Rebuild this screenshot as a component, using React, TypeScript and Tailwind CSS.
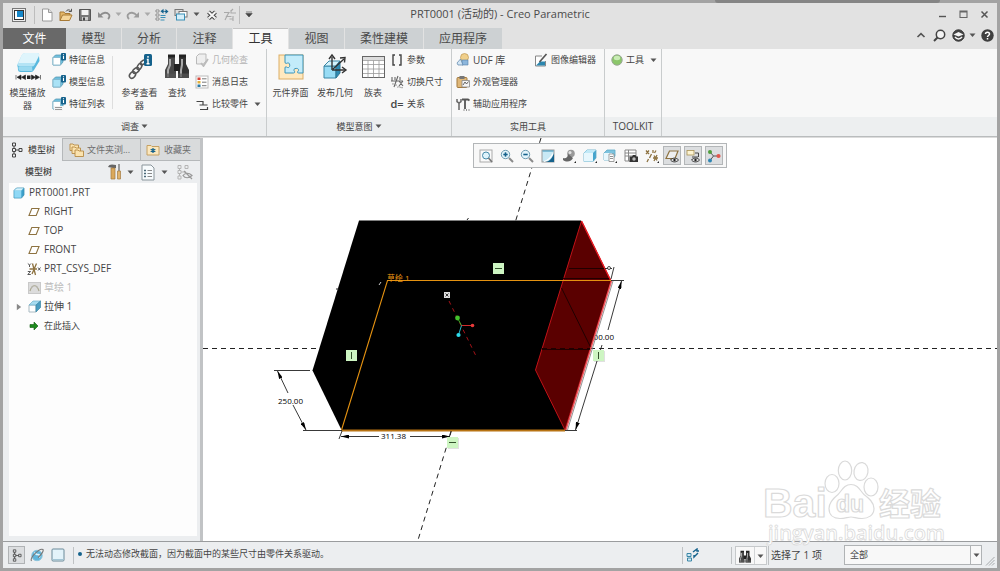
import type { ReactNode } from "react";

type IconProps = { w?: number; h?: number; box?: string; children: ReactNode };

function Svg({ w = 14, h = 14, box, children }: IconProps) {
  return (
    <svg width={w} height={h} viewBox={box ?? `0 0 ${w} ${h}`} fill="none" className="shrink-0" aria-hidden="true">
      {children}
    </svg>
  );
}

function Caret({ color = "#555" }: { color?: string }) {
  return (
    <Svg w={7} h={5}>
      <path d="M.5 .5h6l-3 3.5z" fill={color} />
    </Svg>
  );
}

/* ---------- quick access icons ---------- */

const AppIcon = () => (
  <Svg w={14} h={14}>
    <rect x=".5" y=".5" width="13" height="13" fill="#eee" stroke="#777" />
    <rect x="2.5" y="2.5" width="9" height="9" fill="#fff" stroke="#333" />
    <rect x="5" y="3" width="6" height="6" fill="#1587c9" />
  </Svg>
);
const NewIcon = () => (
  <Svg>
    <path d="M2.5 1h6L12 4.5V13H2.5z" fill="#fff" stroke="#9a9a9a" />
    <path d="M8.5 1v3.5H12" fill="#ddd" stroke="#9a9a9a" />
  </Svg>
);
const OpenIcon = () => (
  <Svg>
    <path d="M1 12.5V4h4l1 1.5h5V7" fill="#e5b86a" stroke="#a87a35" />
    <path d="M1 12.5 3.5 7H13l-2.5 5.5z" fill="#f6d699" stroke="#a87a35" />
    <path d="M7 3.5C8 1.5 10 1.5 11.5 2.5M12.5 .8v2.7H9.8" stroke="#555" />
  </Svg>
);
const SaveIcon = () => (
  <Svg>
    <path d="M1.5 1.5h11v11h-11z" fill="#777" stroke="#555" />
    <rect x="3.5" y="2" width="7" height="5" fill="#f2f2f2" />
    <rect x="4" y="9" width="6" height="3.5" fill="#ccc" />
    <rect x="5" y="9.5" width="2" height="3" fill="#444" />
  </Svg>
);
const UndoIcon = () => (
  <Svg>
    <path d="M3 7.5C6 4 10 4 12 6.5c.8 1.5.5 3-1 4.5" stroke="#8d8d8d" strokeWidth="1.8" />
    <path d="M1 4v5.5h5.5z" fill="#8d8d8d" />
  </Svg>
);
const RedoIcon = () => (
  <Svg>
    <path d="M11 7.5C8 4 4 4 2 6.5c-.8 1.5-.5 3 1 4.5" stroke="#9b9b9b" strokeWidth="1.8" />
    <path d="M13 4v5.5H7.5z" fill="#9b9b9b" />
  </Svg>
);
const RegenIcon = () => (
  <Svg>
    <path d="M1 2h3v2H1zM1 6h3v2H1zM1 10h3v2H1z" fill="#fff" stroke="#777" strokeWidth=".8" />
    <path d="M5.5 7.5h5M5.5 9.5h5M5.5 12h4" stroke="#3a8fb5" strokeWidth="1.2" />
    <path d="M5.500 3.200 8.500 .8v5zM13.500 3.500 10.500 1v5z" fill="#15628c" />
    <path d="M8 3.300h1.500M9.500 3.500H11" stroke="#15628c" />
  </Svg>
);
const WindowsIcon = () => (
  <Svg>
    <rect x="1" y="1.5" width="8" height="6" fill="#ddd" stroke="#777" />
    <rect x="5" y="3.5" width="8" height="5.5" fill="#fff" stroke="#777" />
    <rect x="2.5" y="6" width="8" height="6" fill="#d6effa" stroke="#3a8fb5" />
  </Svg>
);
const CloseWinIcon = () => (
  <Svg>
    <path d="M3.5 4 10.5 10.5M10.5 4 3.500 10.5" stroke="#444" strokeWidth="4" />
    <path d="M3.500 4 10.5 10.5M10.5 4 3.500 10.5" stroke="#f6f6f6" strokeWidth="2" />
  </Svg>
);
const DisabledIcon = () => (
  <Svg>
    <path d="M1 4.5h5l-2.5 4h5M2 12l4-8M8 2v3h5M10 8v5M6.5 11h3M8 3l2-2" stroke="#a9a9a9" strokeWidth="1.1" />
  </Svg>
);

/* ---------- ribbon icons ---------- */

const PlayerIcon = () => (
  <Svg w={28} h={28}>
    <path d="M7.500 2.500Q8.500 0 11 0h12q3 0 2 3l-4 10q-.8 1.500-3 1.500H5Q2.500 14 3.500 11z" fill="#b4e4f5" />
    <path d="M7.500 2.500Q8.500 0 11 0h12q3 0 2 3l-3.500 7H4.500z" fill="#dff5fc" />
    <path d="M3.500 11 4 17q.2 2 2.500 2H17q2 0 3-2l5.500-9L25 3l-4.500 9q-.8 1.500-3 1.500H6q-2.500-.5-2.500-2.500z" fill="#59b9de" />
    <path d="M4.500 13.500h13.500l.5 4.500H7q-2.300 0-2.500-2z" fill="#9bdaf0" />
    <path d="M2 22v4.500M7 22v4.500l-4-2.250zM11.500 22v4.500l-4-2.250zM17.500 22v4.500l4-2.250zM21.500 22v4.500l4-2.250zM26.500 22v4.500" fill="#222" stroke="#222" strokeWidth=".6" />
    <rect x="13" y="22.500" width="3.500" height="3.500" fill="#222" />
  </Svg>
);

function InfoCube({ fill, list = false }: { fill: string; list?: boolean }) {
  return (
    <Svg>
      <path d="M1 4.5 3.500 2H11v7L8.500 12H1z" fill="#6fbfdd" stroke="#5698b3" strokeWidth=".8" />
      <path d="M1 4.5h7.5V12H1z" fill={fill} stroke="#7cb3c9" strokeWidth=".8" />
      {list && <path d="M2 9h9v5H2z" fill="#f4f4f4" />}
      {list && <path d="M3 10.5h7M3 12.5h7" stroke="#999" />}
      <rect x="9" y="0" width="5" height="7.5" rx="1" fill="#15628c" />
      <path d="M11.5 1.200v1M11.5 3v3" stroke="#fff" strokeWidth="1.1" />
    </Svg>
  );
}

const ChainIcon = () => (
  <Svg w={26} h={28}>
    <g stroke="#555" strokeWidth="1.5">
      <ellipse cx="5.500" cy="22" rx="3.600" ry="2.600" transform="rotate(-50 5.500 22)" />
      <ellipse cx="9" cy="17.500" rx="3.600" ry="2.300" transform="rotate(-35 9 17.500)" />
      <ellipse cx="12.500" cy="13.500" rx="3.400" ry="2" transform="rotate(-60 12.500 13.500)" />
      <ellipse cx="16" cy="9.500" rx="3" ry="1.800" transform="rotate(-35 16 9.500)" />
    </g>
    <rect x="17" y="1" width="8" height="12" rx="1.5" fill="#15628c" />
    <path d="M21 3v1.800M19.800 6.500H21v4M19.500 10.800h3" stroke="#fff" strokeWidth="1.4" />
  </Svg>
);

function Binoculars({ w = 28, h = 28 }: { w?: number; h?: number }) {
  return (
    <Svg w={w} h={h} box="0 0 28 28">
      <path d="M5 4h7v9l1 3v9H2v-8l3-6z" fill="#4a4a4a" />
      <path d="M16 4h7v7l3 6v8H15v-9l1-3z" fill="#333" />
      <rect x="11" y="11" width="6" height="7" fill="#222" />
      <path d="M5 1.5h7v3H5zM16 1.5h7v3h-7z" fill="#222" />
      <path d="M7 6v6l-2 5v7M19 6v6l-1 5v7" stroke="#a9a9a9" strokeWidth="2" />
      <path d="M2 20.5h11V25H2zM15 20.5h11V25H15z" fill="#555" fillOpacity=".7" />
    </Svg>
  );
}

const GeomCheckIcon = () => (
  <Svg>
    <path d="M1.5 3.5 4 1h7v7l-2.5 3h-7z" fill="#eee" stroke="#b9b9b9" />
    <path d="m6 10 2.500 3L13 6" stroke="#bbb" strokeWidth="1.8" />
  </Svg>
);
const MsgLogIcon = () => (
  <Svg>
    <rect x="1" y="1" width="12" height="12" fill="#fff" stroke="#bbb" />
    <rect x="2.5" y="2.5" width="3" height="2.5" fill="#d8463a" />
    <rect x="2.5" y="6" width="3" height="2.5" fill="#e2b03d" />
    <rect x="2.5" y="9.5" width="3" height="2.5" fill="#2a7ba5" />
    <path d="M7 3.800h4.500M7 7.200h4.500M7 10.700h4.500" stroke="#777" />
  </Svg>
);
const CompareIcon = () => (
  <Svg>
    <path d="M1.500 4.500H8V8H4.500M8 8h4.500M5 12.500h7.500V10" stroke="#444" strokeWidth="1.2" />
  </Svg>
);
const PuzzleIcon = () => (
  <Svg w={26} h={28}>
    <rect x="1" y="2" width="24" height="24" fill="#ffe9bf" stroke="#dcae66" />
    <path
      d="M7 2H25V20H20.500c-1.500 0-1-1.500 0-2.500 1-2.800-5.500-2.800-4.500 0 1 1 1 2.500-.5 2.500H7v-5c0-2 1.500-1 2.500-.5 3 1 3-5.500 0-4.500C8.500 10.500 7 11 7 9z"
      fill="#c3ecfa"
      stroke="#3b94ba"
    />
  </Svg>
);
const PublishIcon = () => (
  <Svg w={26} h={28}>
    <path d="M2 13h12v12H2z" fill="#98dcf5" stroke="#3a86a5" />
    <path d="m2 13 5-5h11l-4 5z" fill="#d5f3fc" stroke="#3a86a5" />
    <path d="m14 13 4-5v12l-4 5z" fill="#2e8ab2" stroke="#2f7694" />
    <path d="M10 17V4M10 17h13M11 16 22 6" stroke="#333" strokeWidth="1.4" />
    <path d="m7 6 3-4 3 4M20 14l4 3-4 3M18 5l5-.5-.5 5" stroke="#333" strokeWidth="1.4" />
  </Svg>
);
const TableIcon = () => (
  <Svg w={26} h={28}>
    <rect x="2.5" y="3.5" width="22" height="21" fill="#fff" stroke="#666" />
    <rect x="3" y="4" width="21" height="3" fill="#ddd" />
    <path d="M3 7.5h21M3 11.5h21M3 16h21M3 20.5h21M8 7.5v17M13.5 7.5v17M19 7.5v17" stroke="#9b9b9b" strokeWidth=".8" />
  </Svg>
);
const ParamIcon = () => (
  <Svg>
    <path d="M5 2H3v10h2M9 2h2v10H9" stroke="#444" strokeWidth="1.4" />
  </Svg>
);
const DimSwitchIcon = () => (
  <Svg>
    <path d="M1 6h12M4 12 8 1M2 2v4M5 2v3M9 6l4 5M13 6l-4 5M10 2v3" stroke="#666" strokeWidth="1.1" />
    <path d="M2 9c2-1 3 2 5 1M7 12.5c2-2 4 1 6 0" stroke="#999" />
  </Svg>
);
const UdfIcon = () => (
  <Svg>
    <circle cx="8.5" cy="4.5" r="4" fill="#f0cf8a" stroke="#b58c42" strokeWidth=".6" />
    <path d="M6 7h6v5H6z" fill="#8cb6dc" stroke="#5680a8" strokeWidth=".6" />
    <path d="m1 10 3.500-4L7 12H2z" fill="#d3e6f5" stroke="#5680a8" strokeWidth=".7" />
  </Svg>
);
const AppearanceIcon = () => (
  <Svg>
    <rect x="1" y="2.5" width="10" height="10" rx="1" fill="#dfb778" stroke="#a37a3f" />
    <rect x="3.5" y="1" width="5" height="3" fill="#777" />
    <path d="M6 5.5h7.5V12H6z" fill="#f4f4f4" stroke="#888" strokeWidth=".8" />
    <path d="m7 10 2-3 1.500 2 2-2.500" stroke="#555" strokeWidth=".9" />
  </Svg>
);
const AuxAppIcon = () => (
  <Svg>
    <path d="M3 5.5V13M1 2v2.500l2 1.500 2-1.500V2" stroke="#666" strokeWidth="1.5" />
    <path d="M6 2.5h6l1.500 1M9 3v9" stroke="#555" strokeWidth="1.8" />
    <path d="M7.500 13h1M10 13h1M12.500 13h1" stroke="#333" />
  </Svg>
);
const ImageEditIcon = () => (
  <Svg>
    <path d="M1.5 3H8M1.5 3v10h10V8" fill="#fff" stroke="#888" />
    <path d="m2 12.5 4-4h5v4z" fill="#2c86ae" />
    <path d="m5.500 9 7-8" stroke="#555" strokeWidth="1.7" />
  </Svg>
);
const GreenDot = () => (
  <Svg w={12} h={12}>
    <circle cx="6" cy="6" r="5.2" fill="#8bc66a" stroke="#9aa795" />
    <ellipse cx="6" cy="4" rx="3.2" ry="2.2" fill="#c9ecb5" />
  </Svg>
);

/* ---------- navigator icons ---------- */

const TreeGlyph = () => (
  <Svg w={12} h={16}>
    <path d="M1.5 1h3v3h-3zM1.5 6.5h3v3h-3zM1.5 12h3v3h-3zM8 6.5h3v3H8z" stroke="#444" />
    <path d="M3 4v2.500M3 9.500V12M4.500 8H8" stroke="#444" />
  </Svg>
);
const FoldersIcon = () => (
  <Svg w={16} h={16}>
    {[[1, 1], [3, 4], [6, 7]].map(([x, y]) => (
      <path key={x} d={`M${x} ${y + 1}h3l1 1h4.500v5.500H${x}z`} fill="#fbe3ae" stroke="#b78b45" strokeWidth=".9" />
    ))}
  </Svg>
);
const FavoritesIcon = () => (
  <Svg>
    <path d="M1 2.5h4l1 1h7V12H1z" fill="#fbe7bd" stroke="#c5a062" />
    <path d="M7 5v5M4.700 6.200l4.600 2.600M9.300 6.200 4.700 8.800" stroke="#15628c" strokeWidth="1.3" />
  </Svg>
);
const ToolsIcon = () => (
  <Svg w={15} h={18}>
    <path d="M1 4c1-3 4-3 8-2v3H6L1 4z" fill="#666" />
    <path d="M4 5h4v11H4z" fill="#dba95c" stroke="#a37a3f" strokeWidth=".7" />
    <path d="M12 1v7" stroke="#777" strokeWidth="1.4" />
    <path d="M10.5 8h3v8h-3z" fill="#e1b46e" stroke="#a37a3f" strokeWidth=".7" />
  </Svg>
);
const ListPageIcon = () => (
  <Svg w={14} h={17}>
    <path d="M1 1h9l3 3v12H1z" fill="#f7fbfd" stroke="#8a959b" />
    <path d="M3 6.5h2M3 9.5h2M3 12.5h2" stroke="#4a6878" strokeWidth="1.5" />
    <path d="M6.500 6.500h4.500M6.500 9.500h4.500M6.500 12.500h4.500" stroke="#888" />
  </Svg>
);
const HiddenTreeIcon = () => (
  <Svg w={17} h={17}>
    <path d="M2 1.5h3v3H2zM2 6.5h3v3H2zM2 12h3v3H2zM9 1.5h3v3H9z" stroke="#b5b5b5" />
    <path d="M3.500 4.500v2M3.500 9.500V12M5 8h5" stroke="#b5b5b5" />
    <path d="M7 11.500c2-3 6-3 9 0-3 3-7 3-9 0zM8 7l8 8" stroke="#999" strokeWidth="1.2" />
  </Svg>
);
const PartIcon = () => (
  <Svg w={12} h={12}>
    <path d="M1 3.500 3.500 1H11v7L8.500 11H1z" fill="#3ba0cb" stroke="#3b8fb3" strokeWidth=".8" />
    <path d="M1.300 3.500h7V10.700h-7z" fill="#8fd8f5" />
    <path d="M1.300 3.500 3.700 1.300h7L8.300 3.500z" fill="#d7f3fc" />
  </Svg>
);
const PlaneIcon = () => (
  <Svg w={12} h={10}>
    <path d="M3.800 1.500H11L8.200 8.500H1z" fill="#fff" stroke="#8d7240" strokeWidth="1.1" />
  </Svg>
);
const CsysIcon = () => (
  <Svg w={14} h={14}>
    <path d="M5.500 1.500 8.500 13M9.500 1.500 5 12M2.500 7h7.500" stroke="#8d7240" strokeWidth="1.3" />
    <path d="M.8 1.500l1.700 1.500L4 1.500M2.500 3v2M.8 9.500h2.700L.8 12.500h3M11 5.500l2.500 3M13.500 5.500 11 8.500" stroke="#444" strokeWidth=".9" />
  </Svg>
);
const SketchIcon = () => (
  <Svg w={13} h={12}>
    <rect x=".5" y=".5" width="12" height="11" fill="#dcdcdc" stroke="#c9c9c9" />
    <path d="M2 9C4 2 9 2 11 9" stroke="#aaa78f" strokeWidth="1.2" />
    <path d="M3 5h2M8 5h2" stroke="#bbb" />
  </Svg>
);
const ExtrudeIcon = () => (
  <Svg w={13} h={13}>
    <path d="M1 5h7v7H1z" fill="#fff" stroke="#a9bac2" />
    <path d="m1 5 4-4h7.500L8 5z" fill="#a8dcf0" stroke="#6fb0ca" strokeWidth=".7" />
    <path d="m8 5 4.500-4v6.500L8 12z" fill="#4a9cc0" stroke="#3a86a5" strokeWidth=".7" />
  </Svg>
);
const InsertIcon = () => (
  <Svg w={12} h={10}>
    <path d="M2 3.500h4V1L10 5 6 9V6.500H2z" fill="#1d8a1d" stroke="#0d5a0d" strokeWidth=".6" />
  </Svg>
);

/* ---------- view toolbar icons ---------- */

function Magnifier({ sign }: { sign: "+" | "-" }) {
  return (
    <Svg>
      <circle cx="5.5" cy="5.5" r="4.2" fill="#e2f4fb" stroke="#6d9db3" />
      <path d="M3.300 5.500h4.400" stroke="#15628c" strokeWidth="1.6" />
      {sign === "+" && <path d="M5.500 3.300v4.400" stroke="#15628c" strokeWidth="1.6" />}
      <path d="m9 9 4 4" stroke="#8a8a8a" strokeWidth="2" />
    </Svg>
  );
}
const Corner = () => <path d="M12 14h2v-2z" fill="#222" />;

const viewTools: { name: string; on?: boolean; icon: ReactNode }[] = [
  {
    name: "重新调整",
    icon: (
      <Svg>
        <rect x="1" y="1" width="12" height="12" fill="#fafafa" stroke="#aaa" />
        <circle cx="7" cy="6.5" r="3.5" fill="#dff3fb" stroke="#4589a8" />
        <path d="m9.500 9 3.500 4" stroke="#777" strokeWidth="1.6" />
      </Svg>
    ),
  },
  { name: "放大", icon: <Magnifier sign="+" /> },
  { name: "缩小", icon: <Magnifier sign="-" /> },
  {
    name: "重画",
    icon: (
      <Svg>
        <rect x="1" y="1" width="12" height="12" fill="#c8e9f5" stroke="#9a9a9a" />
        <path d="M13 4v9H3c5 0 8-3 10-9z" fill="#15628c" />
        <path d="M1.500 2h11" stroke="#3b94ba" />
        <path d="M3 12.500c4-1 7-4 9-8" stroke="#fff" strokeWidth="1.2" />
      </Svg>
    ),
  },
  {
    name: "渲染选项",
    icon: (
      <Svg>
        <circle cx="9" cy="4.5" r="3.8" fill="#999" />
        <path d="M1 9c3 1 5-1 5-4l5 4c-1 3-6 5-10 2z" fill="#666" />
        <circle cx="8" cy="3.5" r="1.5" fill="#e3e3e3" />
        <Corner />
      </Svg>
    ),
  },
  {
    name: "显示样式",
    icon: (
      <Svg>
        <path d="M1 4 4 1h9v8l-3 3.500H1z" fill="#45a5cd" stroke="#5da9c7" strokeWidth=".8" />
        <path d="M1 4h9v8.500H1z" fill="#e7f7fd" />
        <path d="m1 4 3-3h9l-3 3z" fill="#c2e9f7" />
        <Corner />
      </Svg>
    ),
  },
  {
    name: "已保存方向",
    icon: (
      <Svg>
        <path d="M1 4 4 1h8v6l-3 4H1z" fill="#7cc3df" stroke="#5da9c7" strokeWidth=".8" />
        <path d="M1 4h8v7H1z" fill="#e7f7fd" />
        <path d="M6 5h5v7.500H6z" fill="#fff" stroke="#888" strokeWidth=".8" />
        <path d="M7 7.500h3M7 9.500h3" stroke="#777" strokeWidth=".8" />
        <Corner />
      </Svg>
    ),
  },
  {
    name: "视图管理器",
    icon: (
      <Svg>
        <path d="M1 1h11v11H1zM1 4h11M1 7h11M4.500 1v11" fill="#fff" stroke="#888" />
        <path d="M5.500 7.500H8l1-1.500h2.500l.8 1.500H14V13H5.500z" fill="#333" />
        <circle cx="10" cy="10" r="1.7" fill="#bbb" />
      </Svg>
    ),
  },
  {
    name: "基准显示",
    icon: (
      <Svg>
        <path d="M1 1.500 4 5M4 1.500 1 5M8 1v3M6.500 5 4.500 9M3.500 10 2 13M8 9h5M9 6.500l3 5M12 6l-3 6M11 1.500 9.500 4" stroke="#8d7240" strokeWidth="1.3" />
        <Corner />
      </Svg>
    ),
  },
  {
    name: "平面显示",
    on: true,
    icon: (
      <Svg>
        <path d="M4.500 2H13l-3 7.500H1z" fill="#fff" fillOpacity=".5" stroke="#8d7240" strokeWidth="1.2" />
        <path d="M5.500 11c2-2.500 6-2.500 8 0-2 2.500-6 2.500-8 0z" fill="#ddd" stroke="#333" />
        <circle cx="9.5" cy="11" r="1.2" fill="#222" />
      </Svg>
    ),
  },
  {
    name: "注释显示",
    on: true,
    icon: (
      <Svg>
        <rect x="1" y="1.5" width="7" height="4.5" fill="#fdf4d2" stroke="#a99254" strokeWidth=".8" />
        <path d="M9 4h3.500v4M6 8h6" stroke="#444" />
        <path d="M5.500 11c2-2.500 6-2.500 8 0-2 2.500-6 2.500-8 0z" fill="#ddd" stroke="#333" />
        <circle cx="9.5" cy="11" r="1.2" fill="#222" />
      </Svg>
    ),
  },
  {
    name: "旋转中心",
    on: true,
    icon: (
      <Svg>
        <path d="m3 3 3.500 4L3 11.500M6.500 7H11" stroke="#555" />
        <circle cx="3" cy="3" r="2" fill="#4f9e3c" />
        <circle cx="11.5" cy="7" r="2.1" fill="#e2574c" />
        <circle cx="3" cy="11.5" r="2" fill="#2f86b2" />
      </Svg>
    ),
  },
];

/* ---------- building blocks ---------- */

function BigButton({ icon, label, width }: { icon: ReactNode; label: string; width: string }) {
  return (
    <button className={`${width} flex flex-col items-center gap-1 pt-[3px] text-[9px] leading-[13px]`}>
      <span className="flex h-[30px] items-center justify-center">{icon}</span>
      <span className="max-w-[40px] text-center">{label}</span>
    </button>
  );
}

function RowButton({ icon, label, caret, disabled, latin }: { icon: ReactNode; label: string; caret?: boolean; disabled?: boolean; latin?: boolean }) {
  return (
    <button
      disabled={disabled}
      className={`flex h-[22px] items-center gap-[3px] whitespace-nowrap ${latin ? "text-[10px]" : "text-[9px]"} ${disabled ? "text-[#b4b4b4]" : ""}`}
    >
      {icon}
      <span>{label}</span>
      {caret && (
        <span className="ml-[3px]">
          <Caret />
        </span>
      )}
    </button>
  );
}

function Group({ title, width, caret, latin, children }: { title: string; width: string; caret?: boolean; latin?: boolean; children: ReactNode }) {
  return (
    <section className={`${width} flex shrink-0 flex-col border-r border-[#c9cccd]`}>
      <div className="flex h-[68px]">{children}</div>
      <div className={`flex h-[19px] items-center justify-center gap-[2px] bg-[#edeff0] ${latin ? "text-[10px]" : "text-[9px]"}`}>
        {title}
        {caret && <Caret />}
      </div>
    </section>
  );
}

function IconButton({ name, width, children }: { name: string; width: string; children: ReactNode }) {
  return (
    <button aria-label={name} className={`${width} flex h-5 shrink-0 items-center justify-center`}>
      {children}
    </button>
  );
}

/* ---------- header ---------- */

function TitleBar() {
  return (
    <header className="grid h-[25px] grid-cols-[1fr_auto_1fr] items-center pb-[2px]">
      <div className="flex items-center">
        <IconButton name="窗口" width="w-[31px]"><AppIcon /></IconButton>
        <span className="mr-[2px] h-[18px] w-px bg-[#bdbdbd]" />
        <IconButton name="新建" width="w-[19px]"><NewIcon /></IconButton>
        <IconButton name="打开" width="w-[19px]"><OpenIcon /></IconButton>
        <IconButton name="保存" width="w-[19px]"><SaveIcon /></IconButton>
        <IconButton name="撤消" width="w-[19px]"><UndoIcon /></IconButton>
        <IconButton name="撤消列表" width="w-[10px]"><Caret color="#aaa" /></IconButton>
        <IconButton name="重做" width="w-[19px]"><RedoIcon /></IconButton>
        <IconButton name="重做列表" width="w-[10px]"><Caret color="#aaa" /></IconButton>
        <IconButton name="重新生成" width="w-[19px]"><RegenIcon /></IconButton>
        <IconButton name="窗口切换" width="w-[19px]"><WindowsIcon /></IconButton>
        <IconButton name="窗口列表" width="w-[12px]"><Caret /></IconButton>
        <IconButton name="关闭窗口" width="w-[19px]"><CloseWinIcon /></IconButton>
        <IconButton name="打断" width="w-[18px]"><DisabledIcon /></IconButton>
        <span className="h-[18px] w-px bg-[#bdbdbd]" />
        <IconButton name="自定义" width="w-[18px]">
          <Svg w={8} h={7}>
            <path d="M1 1h6M.8 2.500h6.400L4 6z" fill="#444" stroke="#444" strokeWidth=".6" />
          </Svg>
        </IconButton>
      </div>
      <h1 className="text-[11px] text-[#4a4a4a]">PRT0001 (活动的) - Creo Parametric</h1>
      <div className="flex items-center justify-end pr-[2px]">
        <IconButton name="最小化" width="w-[21px]">
          <Svg w={9} h={9}><path d="M1 6.5h7" stroke="#555" strokeWidth="1.4" /></Svg>
        </IconButton>
        <IconButton name="最大化" width="w-[21px]">
          <Svg w={9} h={9}><path d="M1 1h7v6.500H1zM1 2h7" stroke="#666" strokeWidth="1.1" /></Svg>
        </IconButton>
        <IconButton name="关闭" width="w-[21px]">
          <Svg w={9} h={9}><path d="m1.500 1.500 6 6M7.500 1.500l-6 6" stroke="#555" strokeWidth="1.5" /></Svg>
        </IconButton>
      </div>
    </header>
  );
}

const tabs = [
  { label: "模型", width: "w-[55px]" },
  { label: "分析", width: "w-[54px]" },
  { label: "注释", width: "w-[55px]" },
  { label: "工具", width: "w-[55px]", active: true },
  { label: "视图", width: "w-[55px]" },
  { label: "柔性建模", width: "w-[78px]" },
  { label: "应用程序", width: "w-[78px]" },
];

function TabBar() {
  return (
    <nav className="flex h-[21px] items-stretch text-[12px] leading-[18px]">
      <button className="w-[63px] bg-[#696969] text-white">文件</button>
      <div className="flex gap-px">
        {tabs.map((t) => (
          <button key={t.label} className={`${t.width} ${t.active ? "border-t border-[#c4c4c4] bg-[#f8f8f8] text-[#333]" : "bg-[#cdd1d3] text-[#4a4a4a]"}`}>
            {t.label}
          </button>
        ))}
      </div>
      <div className="ml-auto flex items-center pb-[6px]">
        <IconButton name="折叠" width="w-[18px]">
          <Svg w={10} h={8}><path d="M1.500 5 5 1.700 8.500 5" stroke="#555" strokeWidth="1.7" /></Svg>
        </IconButton>
        <IconButton name="搜索" width="w-[18px]">
          <Svg w={13} h={13}>
            <circle cx="7.5" cy="5.5" r="4.2" fill="#f4f4f4" stroke="#444" strokeWidth="1.5" />
            <path d="m4.500 8.500-3.500 3.500" stroke="#444" strokeWidth="2" />
          </Svg>
        </IconButton>
        <IconButton name="学习" width="w-[20px]">
          <Svg w={13} h={13}>
            <circle cx="6.5" cy="6.5" r="5.7" fill="#444" stroke="#333" />
            <path d="m1.500 5.500 5-2.500 5 2.500-5 2z" fill="#f4f4f4" />
            <path d="M3 8c2 2.500 5 2.500 7 0" stroke="#f4f4f4" strokeWidth="1.5" />
          </Svg>
        </IconButton>
        <IconButton name="学习列表" width="w-[9px]"><Caret /></IconButton>
        <IconButton name="帮助" width="w-[20px]">
          <Svg w={13} h={13}>
            <circle cx="6.5" cy="6.5" r="6.2" fill="#3f3f3f" />
            <path d="M4.500 5c0-2.500 4-2.500 4 0 0 1.500-2 1.500-2 3M6.500 9v1.500" stroke="#fff" strokeWidth="1.5" />
          </Svg>
        </IconButton>
      </div>
    </nav>
  );
}

function Ribbon() {
  return (
    <div className="flex border-b border-[#b9bcbd] bg-[#f8f8f8] text-[#444]">
      <Group title="调查" width="w-[264px]" caret>
        <BigButton icon={<PlayerIcon />} label="模型播放器" width="w-[49px]" />
        <div className="flex w-[60px] flex-col">
          <RowButton icon={<InfoCube fill="#fff" />} label="特征信息" />
          <RowButton icon={<InfoCube fill="#a9e2f6" />} label="模型信息" />
          <RowButton icon={<InfoCube fill="#fff" list />} label="特征列表" />
        </div>
        <span className="mt-[7px] h-[53px] w-px bg-[#dedede]" />
        <BigButton icon={<ChainIcon />} label="参考查看器" width="w-[53px]" />
        <BigButton icon={<Binoculars />} label="查找" width="w-[22px]" />
        <div className="ml-[4px] flex flex-col pl-[3px]">
          <RowButton icon={<GeomCheckIcon />} label="几何检查" disabled />
          <RowButton icon={<MsgLogIcon />} label="消息日志" />
          <RowButton icon={<CompareIcon />} label="比较零件" caret />
        </div>
      </Group>
      <Group title="模型意图" width="w-[185px]" caret>
        <BigButton icon={<PuzzleIcon />} label="元件界面" width="w-[47px]" />
        <BigButton icon={<PublishIcon />} label="发布几何" width="w-[42px]" />
        <BigButton icon={<TableIcon />} label="族表" width="w-[34px]" />
        <div className="flex flex-col">
          <RowButton icon={<ParamIcon />} label="参数" />
          <RowButton icon={<DimSwitchIcon />} label="切换尺寸" />
          <RowButton icon={<span className="w-[14px] text-[11px] font-semibold leading-[14px]">d=</span>} label="关系" />
        </div>
      </Group>
      <Group title="实用工具" width="w-[153px]">
        <div className="flex w-[78px] flex-col pl-[4px]">
          <RowButton icon={<UdfIcon />} label="UDF 库" latin />
          <RowButton icon={<AppearanceIcon />} label="外观管理器" />
          <RowButton icon={<AuxAppIcon />} label="辅助应用程序" />
        </div>
        <div className="pl-[4px]">
          <RowButton icon={<ImageEditIcon />} label="图像编辑器" />
        </div>
      </Group>
      <Group title="TOOLKIT" width="w-[57px]" latin>
        <div className="pl-[6px]">
          <RowButton icon={<GreenDot />} label="工具" caret />
        </div>
      </Group>
      <div className="flex flex-1 flex-col">
        <div className="h-[68px]" />
        <div className="h-[19px] bg-[#edeff0]" />
      </div>
    </div>
  );
}

/* ---------- navigator ---------- */

const treeItems: { label: string; icon: ReactNode; dim?: boolean; open?: boolean; cjk?: boolean }[] = [
  { label: "RIGHT", icon: <PlaneIcon /> },
  { label: "TOP", icon: <PlaneIcon /> },
  { label: "FRONT", icon: <PlaneIcon /> },
  { label: "PRT_CSYS_DEF", icon: <CsysIcon /> },
  { label: "草绘 1", icon: <SketchIcon />, dim: true },
  { label: "拉伸 1", icon: <ExtrudeIcon />, open: true },
  { label: "在此插入", icon: <InsertIcon />, cjk: true },
];

function Navigator() {
  return (
    <aside className="flex w-[200px] shrink-0 flex-col border-r-[3px] border-[#c1c3c5] bg-[#eceef0] text-[#444]">
      <div className="flex h-[23px] text-[9px]">
        <button className="flex w-[59px] items-center gap-[5px] pl-[8px] text-[#333]">
          <TreeGlyph />
          模型树
        </button>
        <button className="flex w-[78px] items-center gap-[2px] border-b border-l border-t border-[#b5b8ba] bg-[#d9dbdc] pl-[6px] text-[#6d6d6d]">
          <FoldersIcon />
          文件夹浏...
        </button>
        <button className="flex flex-1 items-center gap-[4px] border-b border-l border-t border-[#b5b8ba] bg-[#d9dbdc] pl-[5px] text-[#6d6d6d]">
          <FavoritesIcon />
          收藏夹
        </button>
      </div>
      <div className="flex h-[22px] items-center pl-[22px] text-[9px]">
        <h2 className="font-medium">模型树</h2>
        <div className="ml-auto mr-[2px] flex items-center">
          <IconButton name="设置" width="w-[18px]"><ToolsIcon /></IconButton>
          <IconButton name="设置列表" width="w-[15px]"><Caret /></IconButton>
          <IconButton name="显示" width="w-[20px]"><ListPageIcon /></IconButton>
          <IconButton name="显示列表" width="w-[13px]"><Caret /></IconButton>
          <IconButton name="隐藏" width="w-[27px]"><HiddenTreeIcon /></IconButton>
        </div>
      </div>
      <ul className="mb-[5px] ml-[6px] mr-[3px] flex-1 bg-[#fdfdfd] text-[10px]">
        <li className="flex h-[19px] items-center gap-[4px] pl-[4px]">
          <PartIcon />
          PRT0001.PRT
        </li>
        {treeItems.map((t) => (
          <li key={t.label} className={`flex h-[19px] items-center ${t.dim ? "text-[#bbb]" : ""} ${t.cjk ? "text-[9px]" : ""}`}>
            <span className="flex w-[18px] justify-center pl-[2px]">
              {t.open && (
                <Svg w={6} h={8}>
                  <path d="M.8 .8 5.200 4 .8 7.200z" fill="#888" />
                </Svg>
              )}
            </span>
            <span className="mr-[3px] flex w-[14px] justify-center">{t.icon}</span>
            {t.label}
          </li>
        ))}
      </ul>
    </aside>
  );
}

/* ---------- graphics window ---------- */

function Constraint({ x, y, vertical }: { x: number; y: number; vertical?: boolean }) {
  return (
    <g>
      <rect x={x + 1} y={y + 1} width="11" height="11" fill="#000" fillOpacity=".12" />
      <rect x={x} y={y} width="11" height="11" fill="#cdf5c2" />
      <path d={vertical ? `M${x + 5.5} ${y + 2}v7` : `M${x + 2} ${y + 5.5}h7`} stroke="#33512c" />
    </g>
  );
}

const dimensionArrows = [
  "M288 393 277.500 371",
  "M293 405 306 430",
  "M379 436.500H341",
  "M410 436.500H450",
  "M608 330 621.500 281",
  "M602 345 575.500 430",
];

function Model() {
  return (
    <svg className="min-w-0 flex-1 bg-white" fill="none" role="img" aria-label="PRT0001">
      <defs>
        <marker id="arrow" viewBox="0 0 8 4" refX="8" refY="2" markerWidth="8" markerHeight="4" markerUnits="userSpaceOnUse" orient="auto">
          <path d="M0 0 8 2 0 4z" fill="#000" />
        </marker>
      </defs>
      <g transform="translate(-203 -138)" fontFamily="'Open Sans','Noto Sans CJK SC',sans-serif" fontSize="8">
        <path d="M203 348.500H997" stroke="#222" strokeDasharray="5 4" />
        <path d="M541 138 418 540" stroke="#222" strokeDasharray="5 4" />
        <text x="589" y="340" fill="#000">500.00</text>
        <path d="M359 220.500H581L611 281 565 431H342L312.500 370.500z" fill="#000" />
        <path d="M581.500 221 611 281 565 430 535.500 370z" fill="#5a0000" stroke="#c01218" />
        <path d="M569 268.500H605M563 278.500H610M561.500 288 590.500 347M542 349.500H590" stroke="#200000" />
        <path d="M542 348.500H590" stroke="#200000" strokeDasharray="5 4" />
        <path d="M581.500 221 611 281" stroke="#e81c24" strokeWidth="1.3" />
        <path d="M611.500 281 566 430" stroke="#ee5a60" strokeWidth="1.3" />
        <path d="M613 281 567.500 430" stroke="#777" strokeWidth=".8" />
        <path d="M341.500 430 387.500 280.500H611" stroke="#e59211" strokeWidth="1.1" />
        <path d="M341.500 430.500H565" stroke="#b87312" strokeWidth="2" />
        <text x="387" y="281" fill="#f09a14">草绘 1</text>
        <path d="M379 285l2-3" stroke="#ccc" />
        <path d="M336 289h3M467 220l1.500-2" stroke="#222" />

        <g stroke="#222" strokeWidth=".9">
          <path d="M274 370.500H310M303 430.500H342M342 431l-3 8M451 431l-2 7" />
          <path d="M611 280.500H624M565 430.500H577M605 268.500H612M614 267l-3 12" />
          {dimensionArrows.map((d) => (
            <path key={d} d={d} markerEnd="url(#arrow)" />
          ))}
        </g>
        <circle cx="609" cy="268" r="1.5" fill="#fff" stroke="#222" strokeWidth=".8" />
        <g fill="#000">
          <text x="278" y="404">250.00</text>
          <text x="381" y="439">311.38</text>
        </g>

        <path d="M449 301 476 356" stroke="#a51218" strokeDasharray="4 4" />
        <rect x="444" y="292" width="6" height="6" fill="#ddd" />
        <path d="m445.500 293.500 3 3M448.500 293.500l-3 3" stroke="#222" strokeWidth=".9" />
        <path d="M461.500 325.500H472" stroke="#d22b2b" />
        <path d="M461.500 325.500 457.500 318" stroke="#3fae2a" />
        <path d="M461.500 325.500 458.500 335" stroke="#29b7c7" />
        <circle cx="472.500" cy="325.500" r="1.8" fill="#e83a3a" />
        <circle cx="457.500" cy="318" r="2.4" fill="#44c12c" />
        <circle cx="458.500" cy="335" r="2.1" fill="#2ddcec" />

        <Constraint x={346} y={350} vertical />
        <Constraint x={493} y={263} />
        <Constraint x={593} y={350} vertical />
        <Constraint x={447} y={437} />
      </g>
    </svg>
  );
}

function GraphicsArea() {
  return (
    <section className="relative flex min-w-0 flex-1">
      <Model />
      <div className="absolute inset-x-0 top-[5px] flex justify-center">
        <div className="flex h-[25px] w-[254px] items-center justify-between border border-[#b3b6b8] bg-[#f8f8f8] px-[3px]">
          {viewTools.map((t) => (
            <button
              key={t.name}
              aria-label={t.name}
              className={`flex h-[19px] w-[18px] items-center justify-center border ${t.on ? "border-[#b3b6b8] bg-[#dcdee0]" : "border-transparent"}`}
            >
              {t.icon}
            </button>
          ))}
        </div>
      </div>
    </section>
  );
}

/* ---------- status bar ---------- */

function StatusBar() {
  return (
    <footer className="flex h-[27px] items-center border-t border-[#9a9c9e] bg-[#eceef0] text-[9px] text-[#444]">
      <button aria-label="模型树显示" className="ml-[5px] flex h-[18px] w-[17px] items-center justify-center border border-[#b0b3b5] bg-[#dcdee0]">
        <Svg w={10} h={13} box="0 0 12 16">
          <path d="M1.5 1h3v3h-3zM1.5 6.5h3v3h-3zM1.5 12h3v3h-3zM8 6.5h3v3H8zM3 4v2.500M3 9.500V12M4.500 8H8" stroke="#444" />
        </Svg>
      </button>
      <IconButton name="浏览器" width="w-[24px]">
        <Svg w={14} h={14}>
          <circle cx="7" cy="7.5" r="5.2" fill="#5fb4da" stroke="#8cc4dc" />
          <path d="M4 5c2 0 2 2 4 1.500s1 2 2 3" stroke="#e1f4fb" strokeWidth="1.5" />
          <path d="M1.500 13C-.5 10 9.500-.5 13 1.500c1 1.500-2 5.500-5 8" stroke="#777" strokeWidth="1.1" />
        </Svg>
      </IconButton>
      <IconButton name="全屏" width="w-[18px]">
        <Svg w={14} h={14}>
          <rect x="1" y="1" width="12" height="12" rx="1" fill="#e3f3fa" stroke="#6a8a99" />
          <path d="M1.500 11.500h11" stroke="#a4c6d6" />
        </Svg>
      </IconButton>
      <span className="ml-[6px] h-[17px] w-px bg-[#bfc2c4]" />
      <p className="flex items-center gap-[4px] whitespace-nowrap pb-[3px] pl-[4px]">
        <span className="h-[4px] w-[4px] rounded-full bg-[#15628c]" />
        无法动态修改截面，因为截面中的某些尺寸由零件关系驱动。
      </p>
      <span className="ml-auto h-[17px] w-px bg-[#bfc2c4]" />
      <IconButton name="选择状态" width="w-[18px]">
        <Svg w={13} h={14}>
          <path d="M1 5.500h4v3H1zM1.500 10h4v3h-4z" fill="#cfeaf5" stroke="#3b86a6" />
          <path d="m7 4 4-3v2h2M12 5 8 9V7" stroke="#15628c" strokeWidth="1.4" />
        </Svg>
      </IconButton>
      <span className="ml-[30px] mr-[3px] h-[17px] w-px bg-[#bfc2c4]" />
      <div className="flex h-[19px] w-[32px] border border-[#c6c9cb] bg-[#f8f8f8]">
        <IconButton name="查找" width="w-[18px]"><Binoculars w={14} h={14} /></IconButton>
        <span className="w-px bg-[#d2d4d6]" />
        <IconButton name="查找列表" width="w-[11px]"><Caret /></IconButton>
      </div>
      <span className="ml-px h-[19px] w-px bg-[#bfc2c4]" />
      <label htmlFor="filter" className="w-[75px] whitespace-nowrap pl-[2px] text-[10px]">选择了 1 项</label>
      <div className="relative">
        <select id="filter" defaultValue="全部" className="block h-[20px] w-[138px] appearance-none border border-[#b0b3b5] bg-[#f8f8f8] pl-[5px] text-[9px]">
          <option>全部</option>
          <option>特征</option>
          <option>几何</option>
        </select>
        <span className="pointer-events-none absolute inset-y-px right-px flex w-[11px] items-center justify-center border-l border-[#b0b3b5]">
          <Caret />
        </span>
      </div>
      <span className="flex w-[15px] justify-end self-end pb-[2px] pr-[2px]">
        <Svg w={10} h={10}>
          <path d="M1 9.500 9.500 1M4 9.500 9.500 4M7 9.500 9.500 7" stroke="#a5a8aa" />
        </Svg>
      </span>
    </footer>
  );
}

function Watermark() {
  return (
    <div className="pointer-events-none absolute bottom-[18px] right-[48px]">
      <svg width="190" height="95" viewBox="762 458 190 95" fill="#fff" stroke="#dadada" strokeWidth="1.2" strokeLinejoin="round" className="block">
        <ellipse cx="835" cy="486.5" rx="7" ry="9" />
        <ellipse cx="848" cy="473.5" rx="6.7" ry="9.5" />
        <ellipse cx="864" cy="474.5" rx="7" ry="9" transform="rotate(10 864 474.5)" />
        <ellipse cx="874" cy="490" rx="7" ry="9" />
        <path d="M854 487.500c-7 0-9 6-13 10-5 4-9 8-9 14 0 7 5 10 11 10 5 0 8-1.500 11-1.500s6 1.500 11 1.500c6 0 12-3 12-10 0-6-5-10-10-14-4-4-6-10-13-10z" />
        <g fontWeight="700" fontFamily="'Liberation Sans','Noto Sans CJK SC',sans-serif">
          <text x="766" y="520" fontSize="41">Bai</text>
          <text x="839" y="515" fontSize="23">du</text>
          <text x="882" y="518" fontSize="31" fontFamily="'Noto Sans CJK SC',sans-serif">经验</text>
          <text x="771" y="543" fontSize="20" fontFamily="'Open Sans',sans-serif" fontWeight="600" strokeWidth=".8">jingyan.baidu.com</text>
        </g>
      </svg>
    </div>
  );
}

export default function App() {
  return (
    <div lang="zh-CN" className="relative flex min-h-screen flex-col border-x-[3px] border-b-[3px] border-[#a3a3a3] bg-[#e2e2e2] font-['Open_Sans','Noto_Sans_CJK_SC',sans-serif]">
      <div className="-mx-[3px] flex h-[3px] justify-end bg-[#a3a3a3] pr-[6%]">
        <span className="w-[24%] rounded-b-sm bg-[#858585]" />
      </div>
      <TitleBar />
      <TabBar />
      <Ribbon />
      <main className="flex flex-1 border-t border-[#dcdcdc]">
        <Navigator />
        <GraphicsArea />
      </main>
      <StatusBar />
      <Watermark />
    </div>
  );
}
